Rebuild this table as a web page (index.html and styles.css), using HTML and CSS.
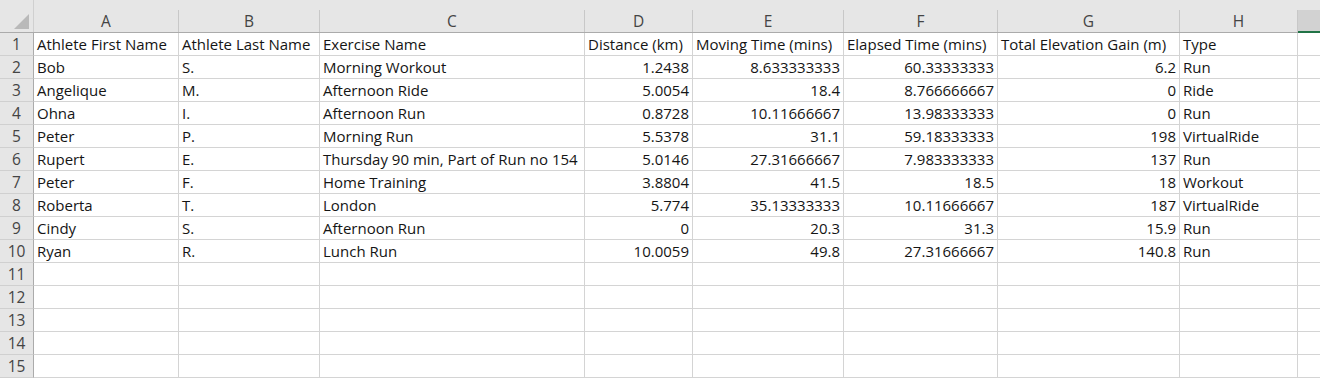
FILE: index.html
```html
<!DOCTYPE html>
<html>
<head>
<meta charset="utf-8">
<link rel="stylesheet" href="styles.css">
</head>
<body>
<div class="sheet">
  <div class="row head-row">
    <div class="corner"><span class="tri"></span></div>
    <div class="ch">A</div><div class="ch">B</div><div class="ch">C</div><div class="ch">D</div>
    <div class="ch">E</div><div class="ch">F</div><div class="ch">G</div><div class="ch">H</div>
    <div class="ch sel"></div>
  </div>
  <div class="row"><div class="rh">1</div><div class="c">Athlete First Name</div><div class="c">Athlete Last Name</div><div class="c">Exercise Name</div><div class="c">Distance (km)</div><div class="c">Moving Time (mins)</div><div class="c">Elapsed Time (mins)</div><div class="c">Total Elevation Gain (m)</div><div class="c">Type</div><div class="c"></div></div>
  <div class="row"><div class="rh">2</div><div class="c">Bob</div><div class="c">S.</div><div class="c">Morning Workout</div><div class="c n">1.2438</div><div class="c n">8.633333333</div><div class="c n">60.33333333</div><div class="c n">6.2</div><div class="c">Run</div><div class="c"></div></div>
  <div class="row"><div class="rh">3</div><div class="c">Angelique</div><div class="c">M.</div><div class="c">Afternoon Ride</div><div class="c n">5.0054</div><div class="c n">18.4</div><div class="c n">8.766666667</div><div class="c n">0</div><div class="c">Ride</div><div class="c"></div></div>
  <div class="row"><div class="rh">4</div><div class="c">Ohna</div><div class="c">I.</div><div class="c">Afternoon Run</div><div class="c n">0.8728</div><div class="c n">10.11666667</div><div class="c n">13.98333333</div><div class="c n">0</div><div class="c">Run</div><div class="c"></div></div>
  <div class="row"><div class="rh">5</div><div class="c">Peter</div><div class="c">P.</div><div class="c">Morning Run</div><div class="c n">5.5378</div><div class="c n">31.1</div><div class="c n">59.18333333</div><div class="c n">198</div><div class="c">VirtualRide</div><div class="c"></div></div>
  <div class="row"><div class="rh">6</div><div class="c">Rupert</div><div class="c">E.</div><div class="c">Thursday 90 min, Part of Run no 154</div><div class="c n">5.0146</div><div class="c n">27.31666667</div><div class="c n">7.983333333</div><div class="c n">137</div><div class="c">Run</div><div class="c"></div></div>
  <div class="row"><div class="rh">7</div><div class="c">Peter</div><div class="c">F.</div><div class="c">Home Training</div><div class="c n">3.8804</div><div class="c n">41.5</div><div class="c n">18.5</div><div class="c n">18</div><div class="c">Workout</div><div class="c"></div></div>
  <div class="row"><div class="rh">8</div><div class="c">Roberta</div><div class="c">T.</div><div class="c">London</div><div class="c n">5.774</div><div class="c n">35.13333333</div><div class="c n">10.11666667</div><div class="c n">187</div><div class="c">VirtualRide</div><div class="c"></div></div>
  <div class="row"><div class="rh">9</div><div class="c">Cindy</div><div class="c">S.</div><div class="c">Afternoon Run</div><div class="c n">0</div><div class="c n">20.3</div><div class="c n">31.3</div><div class="c n">15.9</div><div class="c">Run</div><div class="c"></div></div>
  <div class="row"><div class="rh">10</div><div class="c">Ryan</div><div class="c">R.</div><div class="c">Lunch Run</div><div class="c n">10.0059</div><div class="c n">49.8</div><div class="c n">27.31666667</div><div class="c n">140.8</div><div class="c">Run</div><div class="c"></div></div>
  <div class="row"><div class="rh">11</div><div class="c"></div><div class="c"></div><div class="c"></div><div class="c"></div><div class="c"></div><div class="c"></div><div class="c"></div><div class="c"></div><div class="c"></div></div>
  <div class="row"><div class="rh">12</div><div class="c"></div><div class="c"></div><div class="c"></div><div class="c"></div><div class="c"></div><div class="c"></div><div class="c"></div><div class="c"></div><div class="c"></div></div>
  <div class="row"><div class="rh">13</div><div class="c"></div><div class="c"></div><div class="c"></div><div class="c"></div><div class="c"></div><div class="c"></div><div class="c"></div><div class="c"></div><div class="c"></div></div>
  <div class="row"><div class="rh">14</div><div class="c"></div><div class="c"></div><div class="c"></div><div class="c"></div><div class="c"></div><div class="c"></div><div class="c"></div><div class="c"></div><div class="c"></div></div>
  <div class="row"><div class="rh">15</div><div class="c"></div><div class="c"></div><div class="c"></div><div class="c"></div><div class="c"></div><div class="c"></div><div class="c"></div><div class="c"></div><div class="c"></div></div>
</div>
</body>
</html>
```

FILE: styles.css
```css
* { box-sizing: border-box; margin: 0; padding: 0; }
html, body { width: 1320px; height: 378px; overflow: hidden; background: #ffffff; }
body {
  font-family: "Open Sans", Lato, sans-serif;
  font-size: 15px;
  color: #151515;
}
.sheet { display: flex; flex-direction: column; width: 1320px; }
.row {
  display: grid;
  grid-template-columns: 34px 145px 141px 265px 108px 151px 154px 182px 118px 56px;
  height: 23px;
}
.head-row {
  height: 33px;
  background: #e6e6e6;
  padding-top: 10px;
  border-bottom: 1px solid #ababab;
}
.corner {
  margin-top: -10px;
  border-right: 1px solid #d0d0d0;
  display: flex;
  justify-content: flex-end;
  align-items: flex-end;
  padding: 0 4px 3px 0;
}
.tri {
  display: block;
  width: 15px;
  height: 15px;
  background: #b9b9b9;
  clip-path: polygon(100% 0, 100% 100%, 0 100%);
}
.ch {
  border-right: 1px solid #c8c8c8;
  color: #444;
  display: flex;
  align-items: center;
  justify-content: center;
  font-size: 15.5px;
}
.ch.sel {
  background: #d2d2d2;
  border-bottom: 2px solid #217346;
  margin-bottom: -1px;
}
.rh {
  background: #e6e6e6;
  border-right: 1px solid #ababab;
  border-bottom: 1px solid #d0d0d0;
  color: #444;
  display: flex;
  align-items: center;
  justify-content: center;
  font-size: 15.5px;
}
.c {
  border-right: 1px solid #d4d4d4;
  border-bottom: 1px solid #d4d4d4;
  display: flex;
  align-items: center;
  padding: 0 3px 1px 3px;
  white-space: nowrap;
  overflow: hidden;
}
.c.n { justify-content: flex-end; }
```
